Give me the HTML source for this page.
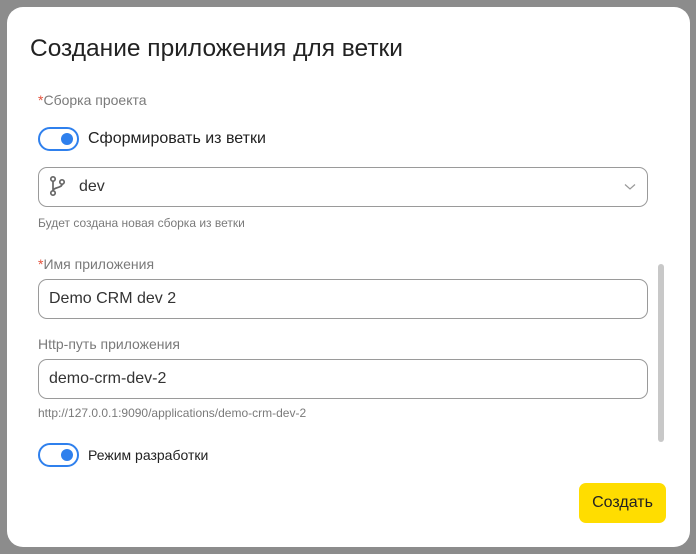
<!DOCTYPE html>
<html><head><meta charset="utf-8"><style>
*{margin:0;padding:0;box-sizing:border-box}
body{width:696px;height:554px;background:#8c8c8c;font-family:"Liberation Sans",sans-serif;position:relative;overflow:hidden}
.d{position:absolute;left:7px;top:7px;width:683px;height:540px;background:#fff;border-radius:16px}
.a{position:absolute;white-space:nowrap}
.t{left:30px;top:35px;font-size:24.5px;color:#222}
.l{font-size:14px;color:#7a7a7a}
.r{color:#e5533d}
.h{font-size:12px;color:#7a7a7a}
.in{position:absolute;left:38px;width:610px;height:40px;border:1px solid #9a9a9a;border-radius:9px;font-size:16px;color:#333;padding-left:10px;line-height:38px}
.tg{position:absolute;left:38px;width:41px;height:24px;border:2px solid #2f80ed;border-radius:12px}
.tg::after{content:"";position:absolute;left:21px;top:4px;width:12px;height:12px;border-radius:50%;background:#2f80ed}
.tl{font-size:16px;color:#222}
</style></head><body>
<div class="d"></div>
<div class="a t">Создание приложения для ветки</div>
<div class="a l" style="left:38px;top:92px"><span class="r">*</span>Сборка проекта</div>
<div class="tg" style="top:127px"></div>
<div class="a tl" style="left:88px;top:130px">Сформировать из ветки</div>
<div class="in" style="top:167px;padding-left:40px">dev</div>
<svg class="a" style="left:48px;top:175px" width="20" height="22" viewBox="0 0 20 22" fill="none" stroke="#666" stroke-width="1.7"><circle cx="5" cy="4" r="2.2"/><circle cx="5" cy="18" r="2.2"/><circle cx="14" cy="7" r="2.2"/><path d="M5 6.2v9.6M14 9.2c0 4-9 3-9 6.6"/></svg>
<svg class="a" style="left:624px;top:183px" width="12" height="8" viewBox="0 0 12 8" fill="none" stroke="#999" stroke-width="1.2"><path d="M1 1.5l5 4.5 5-4.5"/></svg>
<div class="a h" style="left:38px;top:216px">Будет создана новая сборка из ветки</div>
<div class="a l" style="left:38px;top:256px"><span class="r">*</span>Имя приложения</div>
<div class="in" style="top:279px">Demo CRM dev 2</div>
<div class="a l" style="left:38px;top:336px">Http-путь приложения</div>
<div class="in" style="top:359px">demo-crm-dev-2</div>
<div class="a h" style="left:38px;top:406px">http://127.0.0.1:9090/applications/demo-crm-dev-2</div>
<div class="tg" style="top:443px"></div>
<div class="a" style="left:88px;top:447px;font-size:14px;color:#222">Режим разработки</div>
<div class="a" style="left:658px;top:264px;width:6px;height:178px;border-radius:3px;background:#c8c8c8"></div>
<div class="a" style="left:579px;top:483px;width:87px;height:40px;border-radius:7px;background:#ffdd00;font-size:16px;color:#222;text-align:center;line-height:40px">Создать</div>
</body></html>
